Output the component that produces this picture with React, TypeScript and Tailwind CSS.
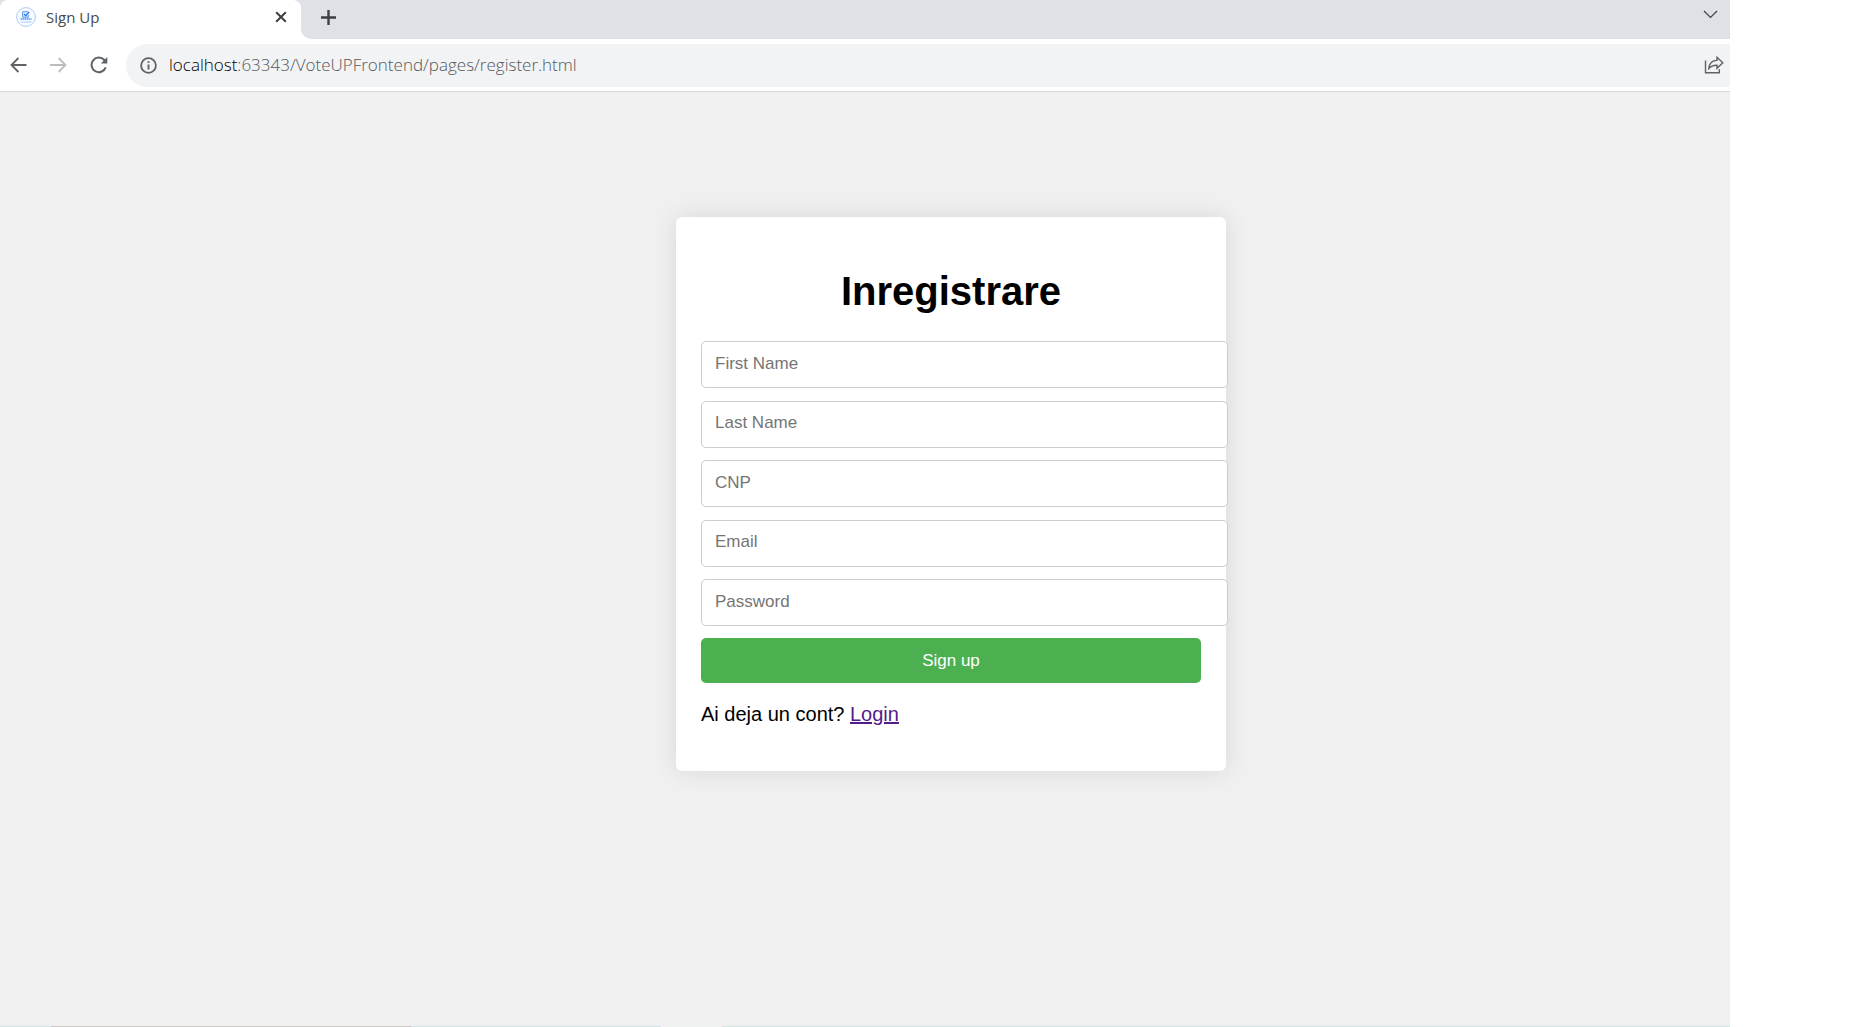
import React from "react";

const fields = [
  { name: "firstName", label: "First Name", type: "text" },
  { name: "lastName", label: "Last Name", type: "text" },
  { name: "cnp", label: "CNP", type: "text" },
  { name: "email", label: "Email", type: "email" },
  { name: "password", label: "Password", type: "password" },
];

function Favicon() {
  return (
    <svg width="20" height="20" viewBox="0 0 20 20" fill="none" aria-hidden="true">
      <circle cx="10" cy="10" r="9.4" fill="#f8fbff" stroke="#a3c6fb" strokeWidth="0.9" />
      <path d="M12 4.8H6.7v5.4h5.6V8" stroke="#4b8ff5" strokeWidth="1" />
      <path d="M8 7l1.7 1.8L13.2 5" stroke="#2f7bf0" strokeWidth="1.4" />
      <path d="M4.5 12h11" stroke="#7fb0fa" strokeWidth="1.8" strokeDasharray="1.6 .4" />
      <path d="M5 15h10.5" stroke="#b5d1fc" strokeWidth="1.2" />
    </svg>
  );
}

function TabStrip() {
  return (
    <div className="flex h-[39px] bg-[#dee1e6]">
      <div className="flex h-full w-[301px] shrink-0 items-start rounded-tl-lg rounded-tr-lg bg-white pl-4">
        <div className="flex h-[34px] flex-1 items-center">
          <Favicon />
          <span className="ml-[10px] flex-1 font-['Open_Sans',sans-serif] text-[15px] leading-5 text-[#45494d]">
            Sign Up
          </span>
          <button aria-label="Close tab" className="mr-[14px] flex size-3 items-center justify-center">
            <svg width="12" height="12" viewBox="0 0 12 12" stroke="#3c4043" strokeWidth="2">
              <path d="M1.2 1.2l9.6 9.6M10.8 1.2L1.2 10.8" />
            </svg>
          </button>
        </div>
      </div>
      <div className="flex flex-1 items-start justify-between bg-white">
        <div className="flex h-full flex-1 items-start justify-between rounded-bl-[10px] bg-[#dee1e6] pr-3 pl-5">
          <button aria-label="New tab" className="mt-[10px]">
            <svg width="15" height="15" viewBox="0 0 15 15" stroke="#3c4043" strokeWidth="2.4">
              <path d="M7.5 0v15M0 7.5h15" />
            </svg>
          </button>
          <button aria-label="Search tabs" className="mt-[10px]">
            <svg width="15" height="9" viewBox="0 0 15 9" fill="none" stroke="#3c4043" strokeWidth="1.2">
              <path d="M1 1l6.5 6.5L14 1" />
            </svg>
          </button>
        </div>
      </div>
    </div>
  );
}

function Toolbar() {
  return (
    <div className="flex h-[53px] items-center border-b border-[#d5d6d8] bg-white pl-[10px]">
      <button aria-label="Back">
        <svg width="17" height="16" viewBox="0 0 17 16" fill="none" stroke="#5f6368" strokeWidth="1.8">
          <path d="M16.500 8H1.8M8.4 1L1.500 8l6.900 7" />
        </svg>
      </button>
      <button aria-label="Forward" className="ml-[23px]">
        <svg width="17" height="16" viewBox="0 0 17 16" fill="none" stroke="#babcbe" strokeWidth="1.8">
          <path d="M0 8h15.2M8.6 1l6.9 7-6.9 7" />
        </svg>
      </button>
      <button aria-label="Reload" className="ml-[23px]">
        <svg width="18" height="18" viewBox="0 0 18 18" fill="none">
          <path d="M15.7 11.4A7.3 7.3 0 1 1 14.3 4l1.2 1.4" stroke="#5f6368" strokeWidth="2" />
          <path d="M17.3 1v6.4h-6.4z" fill="#5f6368" />
        </svg>
      </button>
      <div className="ml-[18px] flex h-[43px] flex-1 items-center rounded-l-full bg-[#f1f3f4] pr-[6px] pl-[14px]">
        <svg width="17" height="17" viewBox="0 0 17 17" fill="none" aria-hidden="true">
          <circle cx="8.5" cy="8.5" r="7.4" stroke="#5f6368" strokeWidth="1.8" />
          <path d="M8.5 7.4v5M8.5 4.2v1.9" stroke="#5f6368" strokeWidth="1.9" />
        </svg>
        <div className="ml-3 flex-1 font-['Open_Sans',sans-serif] text-[17px] leading-6 font-light text-[#54585c]">
          <span className="text-black">localhost</span>:63343/VoteUPFrontend/pages/register.html
        </div>
        <button aria-label="Share this page">
          <svg width="20" height="18" viewBox="0 0 20 18" fill="none" stroke="#5f6368" strokeWidth="1.4">
            <path d="M1.5 4.5v12.2h13.8v-3.5" />
            <path d="M4.8 12.5C5.2 8 8 4.5 13 4.4V1.3l5.8 5.5-5.8 5.5V9.2C9.5 9 7 10 4.8 12.5z" />
          </svg>
        </button>
      </div>
    </div>
  );
}

function RegisterCard() {
  return (
    <main className="w-[550px] rounded-md bg-white px-[25px] pt-[51px] pb-[45px] shadow-[0_0_25px_rgba(0,0,0,0.1)]">
      <h1 className="text-center text-[40px] leading-[46px] font-bold text-black">Inregistrare</h1>
      <form className="mt-[27px]" onSubmit={(e) => e.preventDefault()}>
        <div className="-mr-[27px] flex h-[285px] flex-col justify-between">
          {fields.map((f) => (
            <input
              key={f.name}
              name={f.name}
              type={f.type}
              placeholder={f.label}
              aria-label={f.label}
              className="h-[47px] w-full rounded-[5px] border border-[#ccc] bg-white px-[13px] pb-[2px] text-[17px] leading-5 text-black placeholder:text-[#757575]"
            />
          ))}
        </div>
        <button
          type="submit"
          className="mt-3 h-[45px] w-full rounded-[5px] bg-[#4caf50] text-[17px] leading-5 text-white"
        >
          Sign up
        </button>
      </form>
      <p className="mt-[19px] text-[20px] leading-6 text-black">
        Ai deja un cont?{" "}
        <a href="#login" className="text-[#551a8b] underline">
          Login
        </a>
      </p>
    </main>
  );
}

export default function App() {
  return (
    <div className="min-h-screen bg-white pr-36 font-['Liberation_Sans',Arial,sans-serif]">
      <div className="flex min-h-screen flex-col overflow-hidden bg-[#f0f0f0]">
        <TabStrip />
        <Toolbar />
        <div className="flex flex-1 justify-center pt-[125px] pl-[172px]">
          <div>
            <RegisterCard />
          </div>
        </div>
        <div className="flex h-px bg-[#d3e4e4]">
          <div className="ml-[51px] w-[360px] bg-[#cbc7c7]" />
          <div className="ml-[250px] w-[61px] bg-[#f0f2f2]" />
        </div>
      </div>
    </div>
  );
}
